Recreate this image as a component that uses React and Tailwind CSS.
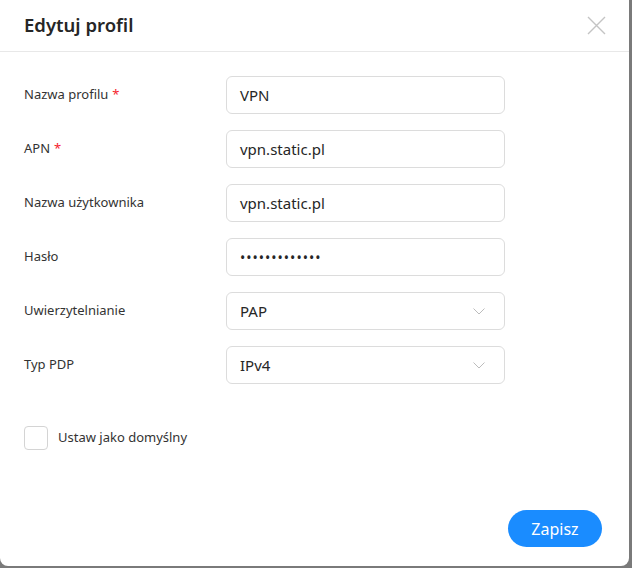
import React from "react";

const font = { fontFamily: '"Segoe UI", "Noto Sans", "Open Sans", sans-serif' };

const Chevron = () => (
  <svg width="12" height="7" viewBox="0 0 12 7" fill="none" className="shrink-0">
    <path d="M0.5 0.5l5.5 5.5 5.5-5.5" stroke="#bcbcbc" strokeWidth="1" />
  </svg>
);

const Row = ({ label, required, children }) => (
  <div className="flex items-center h-[38px] mb-4">
    <div className="w-[202px] text-[13px] text-[#333]">
      {label}
      {required && <span className="text-[#f5222d] ml-1">*</span>}
    </div>
    {children}
  </div>
);

const Input = ({ value, select, dots }) => (
  <div className="w-[279px] h-[38px] border border-[#dcdcdc] rounded-md flex items-center justify-between pl-[13px] pr-[19px] text-[15px] text-[#262626]">
    <span className={dots ? "tracking-[1px] text-[14px]" : ""}>{value}</span>
    {select && <Chevron />}
  </div>
);

export default function App() {
  return (
    <div className="w-[632px] h-[568px] bg-[#7a7a7a] overflow-hidden" style={font}>
      <div className="w-[629px] h-[566px] bg-white rounded-b-lg flex flex-col">
        <div className="h-[52px] border-b border-[#e8e8e8] flex items-center justify-between pl-6 pr-[23px]">
          <div className="text-[18.5px] font-semibold text-[#262626] pb-[2px]">Edytuj profil</div>
          <svg width="19" height="19" viewBox="0 0 19 19" fill="none">
            <path d="M1 1l17 17M18 1L1 18" stroke="#c4c4c4" strokeWidth="1.4" />
          </svg>
        </div>
        <div className="pt-[24px] pl-6">
          <Row label="Nazwa profilu" required>
            <Input value="VPN" />
          </Row>
          <Row label="APN" required>
            <Input value="vpn.static.pl" />
          </Row>
          <Row label="Nazwa użytkownika">
            <Input value="vpn.static.pl" />
          </Row>
          <Row label="Hasło">
            <Input value="•••••••••••••" dots />
          </Row>
          <Row label="Uwierzytelnianie">
            <Input value="PAP" select />
          </Row>
          <Row label="Typ PDP">
            <Input value="IPv4" select />
          </Row>
          <div className="flex items-center mt-[42px] gap-[10px]">
            <div className="w-6 h-6 border border-[#d4d4d4] rounded-[4px]" />
            <span className="text-[13px] text-[#333]">Ustaw jako domyślny</span>
          </div>
        </div>
        <div className="flex-1" />
        <div className="flex justify-end pr-[27px] pb-[19px]">
          <button className="w-[94px] h-[37px] rounded-full bg-[#1a8cff] text-white text-[16px]">Zapisz</button>
        </div>
      </div>
    </div>
  );
}
